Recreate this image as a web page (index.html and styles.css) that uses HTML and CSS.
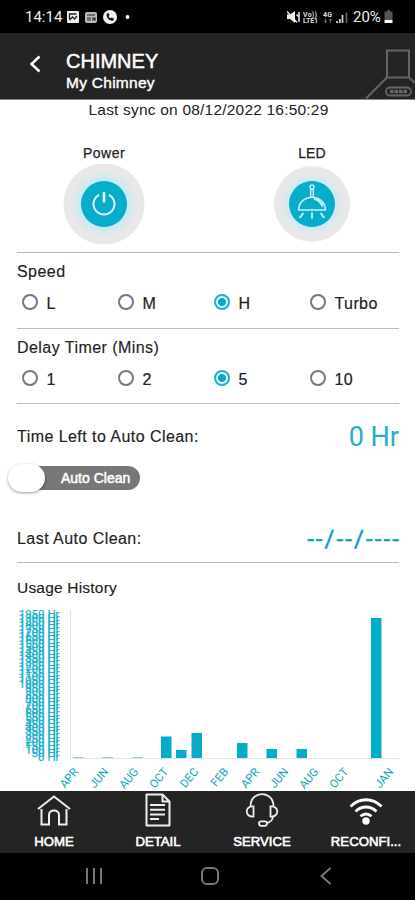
FILE: index.html
```html
<!DOCTYPE html>
<html lang="en">
<head>
  <meta charset="UTF-8">
  <title>My Chimney</title>
  <link rel="stylesheet" href="styles.css">
</head>
<body>
  <div class="status-bar">
    <span class="clock">14:14</span>
    <svg class="status-left" width="66" height="16" viewBox="0 0 66 16">
      <rect x="1" y="2" width="12" height="12" rx="1" fill="#eee"/>
      <path d="M3.500 10V5h7M3.500 11l3-3 2 2 2.500-3" fill="none" stroke="#222" stroke-width="1.300"/>
      <rect x="19" y="3" width="12" height="11" rx="2" fill="#bbb"/>
      <path d="M21 6h8M21 9h4M21 11h4M27 9h2v2h-2z" stroke="#222" stroke-width="1.200" fill="none"/>
      <circle cx="44" cy="8" r="7" fill="#f2f2f2"/>
      <path d="M41 4.500c-2 3 3 8.500 6.500 7l.3-2-2-1-1 .8c-1-.4-1.800-1.200-2.200-2.300l.9-1-.8-1.800z" fill="#111"/>
      <circle cx="61.500" cy="8" r="1.900" fill="#fff"/>
    </svg>
    <div class="status-right">
      <svg width="62" height="16" viewBox="0 0 62 16">
        <path d="M0 5.500h3l5-3.500v12l-5-4H0z" fill="#eee"/>
        <path d="M0 2.500l10 11M9.500 5.500l2 2M12 3v10" stroke="#eee" stroke-width="1.500"/>
        <text class="tiny" x="16" y="7.500" textLength="14">Vo))</text>
        <text class="tiny" x="16" y="14" textLength="15">LTE1</text>
        <text class="tiny" x="36" y="7.500" textLength="9">4G</text>
        <path d="M38.500 10v3.500M37.300 12l1.200 1.500 1.200-1.500M43.500 13.500V10M42.300 11.500l1.200-1.500 1.200 1.500" fill="none" stroke="#777"/>
        <path d="M50 14v-2M52.800 14v-4M55.500 14V6" stroke="#ccc" stroke-width="1.800"/>
        <path d="M59.500 14V3.500" stroke="#666" stroke-width="1.600"/>
      </svg>
      <span class="percent">20%</span>
      <svg width="9" height="14" viewBox="0 0 9 14">
        <path d="M3 0h3v1.500h2.500V10H.5V1.500H3z" fill="#555"/>
        <path d="M.5 10h8v3h-8z" fill="#fff"/>
      </svg>
    </div>
  </div>

  <header class="header">
    <svg class="back" width="14" height="18" viewBox="0 0 14 18">
      <path d="M11.500 1.500L3.500 9l8 7.500" fill="none" stroke="#fff" stroke-width="2.500"/>
    </svg>
    <div class="titles">
      <h1>CHIMNEY</h1>
      <h2>My Chimney</h2>
    </div>
    <svg class="hood" width="50" height="50" viewBox="0 0 50 50">
      <path d="M22 1.500h22v27h-22zM1 49.500L22 28.500M44 28.500L50 34" fill="none" stroke="#666" stroke-width="2"/>
      <rect x="21" y="38.500" width="25" height="8" rx="4" fill="none" stroke="#666" stroke-width="1.800"/>
      <path d="M25 42.500h17" stroke="#666" stroke-width="3.500" stroke-dasharray="3.500 1"/>
    </svg>
  </header>

  <main class="content">
    <p class="sync">Last sync on 08/12/2022 16:50:29</p>

    <section class="switches">
      <div class="switch power">
        <span>Power</span>
        <svg width="82" height="82" viewBox="-41 -41 82 82">
          <defs>
            <radialGradient id="glow">
              <stop offset="0.500" stop-color="#b5eef7"/>
              <stop offset="0.680" stop-color="#d5eaee"/>
              <stop offset="0.850" stop-color="#e9e7e7"/>
            </radialGradient>
          </defs>
          <circle r="40.500" fill="url(#glow)"/>
          <circle r="23" fill="#08adca"/>
          <path d="M-5-9.200a10.500 10.500 0 1 0 10 0" fill="none" stroke="#d9f7fa" stroke-width="2"/>
          <path d="M0-12v10.500" stroke="#d9f7fa" stroke-width="2.600"/>
        </svg>
      </div>
      <div class="switch led">
        <span>LED</span>
        <svg width="82" height="82" viewBox="-41 -41 82 82">
          <circle r="38" fill="url(#glow)"/>
          <circle r="23" fill="#08adca"/>
          <g fill="none" stroke="#c5f1f6" stroke-width="1.500">
            <circle cx="0" cy="-17" r="2"/>
            <path d="M-1.300-15v8M1.300-15v8"/>
            <path d="M-13.500 6c1-17 26-17 27 0zM2-5c4 1 7 4 8.500 8M5-5l6 6"/>
            <path d="M-8.500 9l-4 5M0 8.500v6M8.500 9l4 5" stroke-width="1.900"/>
          </g>
        </svg>
      </div>
    </section>

    <section class="options speed">
      <h3>Speed</h3>
      <div class="radios">
        <label><i class="radio"></i>L</label>
        <label><i class="radio"></i>M</label>
        <label><i class="radio checked"></i>H</label>
        <label><i class="radio"></i>Turbo</label>
      </div>
    </section>

    <section class="options">
      <h3>Delay Timer (Mins)</h3>
      <div class="radios">
        <label><i class="radio"></i>1</label>
        <label><i class="radio"></i>2</label>
        <label><i class="radio checked"></i>5</label>
        <label><i class="radio"></i>10</label>
      </div>
    </section>

    <section class="clean">
      <div class="row">
        <h3>Time Left to Auto Clean:</h3>
        <span class="hours">0 Hr</span>
      </div>
      <div class="toggle"><i class="knob"></i><span>Auto Clean</span></div>
      <div class="row last">
        <h3>Last Auto Clean:</h3>
        <span class="date">--/--/----</span>
      </div>
    </section>

    <section class="history">
      <h3>Usage History</h3>
      <svg class="chart" id="chart" width="415" height="187" viewBox="0 603 415 187">
        <path d="M70.500 609V757" stroke="#e2e2e2"/>
        <path d="M70 757.500H399" stroke="#dfe3e3"/>
        <g id="hours" class="hours-axis"></g>
        <g id="bars" fill="#05abc9"></g>
        <g id="months" class="months-axis"></g>
      </svg>
    </section>
  </main>

  <nav class="tabs">
    <div class="tab">
      <svg width="36" height="36" viewBox="0 0 36 36">
        <path d="M2 17L18 4.500 34 17M5.500 17v15.500h7.500V23c0-6 10-6 10 0v9.500h7.500V17" fill="none" stroke="#eee" stroke-width="2"/>
      </svg>
      <span>HOME</span>
    </div>
    <div class="tab">
      <svg width="36" height="36" viewBox="0 0 36 36">
        <path d="M6.500 2.500h16l7 7v24h-23zM22.500 2.500v7h7" fill="none" stroke="#eee" stroke-width="2" stroke-linejoin="round"/>
        <path d="M10 13h15M10 17.700h15M10 22.400h15M10 27h9" stroke="#eee" stroke-width="2"/>
      </svg>
      <span>DETAIL</span>
    </div>
    <div class="tab">
      <svg width="36" height="36" viewBox="0 0 36 36">
        <g fill="none" stroke="#eee" stroke-width="1.800">
          <path d="M6.500 14.500C6.500-2 29.500-2 29.500 14.500"/>
          <path d="M9.500 14.500v10c-9 1-9-11 0-10zM26.500 14.500v10c9 1 9-11 0-10z"/>
          <path d="M29 24.500c-.5 4-3 6-6.500 6.500"/>
          <rect x="15" y="29.300" width="8" height="4.500" rx="2.200"/>
        </g>
      </svg>
      <span>SERVICE</span>
    </div>
    <div class="tab">
      <svg width="36" height="36" viewBox="0 0 36 36">
        <path d="M2.500 14.500c9-9 22-9 31 0M7.500 19.500c6-6 15-6 21 0M12.500 24.300c3.500-3 7.500-3 11 0" fill="none" stroke="#fff" stroke-width="2.800"/>
        <circle cx="18" cy="29" r="3.700" fill="#fff"/>
      </svg>
      <span>RECONFI...</span>
    </div>
  </nav>

  <div class="system-nav">
    <svg width="18" height="18" viewBox="0 0 18 18"><path d="M2 1v16M9 1v16M16 1v16" stroke="#777" stroke-width="2"/></svg>
    <svg width="18" height="18" viewBox="0 0 18 18"><rect x="1" y="1" width="16" height="16" rx="5" fill="none" stroke="#777" stroke-width="2"/></svg>
    <svg width="18" height="18" viewBox="0 0 18 18"><path d="M13.500 1L4.500 9l9 8" fill="none" stroke="#777" stroke-width="2"/></svg>
  </div>

  <script src="chart.js"></script>
</body>
</html>
```
FILE: styles.css
```css
* {
  box-sizing: border-box;
}
body {
  margin: 0;
  width: 415px;
  height: 900px;
  overflow: hidden;
  background: #fff;
  color: #222;
  font-family: "Liberation Sans", Arial, sans-serif;
}
h1, h2, h3, p {
  margin: 0;
  font-weight: normal;
}
svg {
  display: block;
  flex: none;
}

.status-bar {
  display: flex;
  align-items: center;
  height: 33px;
  padding: 1px 22px 0 25px;
  background: #000;
  color: #eee;
  font-family: Roboto, sans-serif;
  font-size: 15px;
}
.clock {
  width: 41px;
}
.status-right {
  display: flex;
  align-items: center;
  margin-left: auto;
}
.percent {
  width: 31px;
  margin-left: 4px;
  font-size: 15px;
}
.tiny {
  fill: #ddd;
  font-size: 7px;
  font-weight: bold;
}

.header {
  display: flex;
  height: 67px;
  padding-left: 28px;
  background: #242424;
  border-bottom: 1px solid #888;
  color: #fff;
}
.back {
  margin-top: 22px;
}
.titles {
  margin: 17px 0 0 24px;
}
.titles h1 {
  font-size: 20px;
  line-height: 23px;
  -webkit-text-stroke: 0.5px #fff;
}
.titles h2 {
  font-size: 15.5px;
  line-height: 20px;
  letter-spacing: 0.27px;
  -webkit-text-stroke: 0.4px #fff;
}
.hood {
  margin: 16px 0 0 auto;
}

.content {
  height: 691px;
}
.sync {
  height: 43px;
  padding-left: 2px;
  font-size: 15.5px;
  line-height: 20px;
  letter-spacing: 0.2px;
  text-align: center;
}
.switches {
  display: flex;
  justify-content: space-between;
  height: 110px;
  margin: 0 16px 0 17px;
  padding: 0 46px 0 46px;
  border-bottom: 1px solid #a9c0c0;
}
.switch {
  display: flex;
  flex-direction: column;
  align-items: center;
  width: 82px;
  font-size: 14px;
  line-height: 20px;
  letter-spacing: 0.5px;
  -webkit-text-stroke: 0.25px #222;
}
.led span {
  letter-spacing: 0.1px;
}
h3 {
  font-size: 16px;
  line-height: 20px;
  letter-spacing: 0.45px;
  -webkit-text-stroke: 0.15px #222;
}

.options {
  height: 75.5px;
  margin: 0 16px 0 17px;
  padding-top: 9px;
  border-bottom: 1px solid #b4c0c0;
}
.radios {
  display: grid;
  grid-template-columns: repeat(4, 96px);
  margin-top: 10px;
  padding-left: 4.5px;
}
.radios label {
  display: flex;
  gap: 9px;
  font-size: 16px;
  line-height: 24px;
  letter-spacing: 0.4px;
  -webkit-text-stroke: 0.2px #222;
}
.radio {
  width: 16px;
  height: 16px;
  margin-top: 2px;
  border: 2px solid #777;
  border-radius: 50%;
}
.radio.checked {
  border-color: #1aafcb;
  background: radial-gradient(circle, #08a5c4 0 3.5px, #e6fafc 4.5px);
}

.clean {
  height: 159px;
  margin: 0 16px 0 17px;
  padding-top: 18px;
  border-bottom: 1px solid #a9c0c0;
}
.row {
  display: flex;
  align-items: center;
  justify-content: space-between;
  height: 30px;
}
.hours, .date {
  color: #21b0cb;
  font-family: Roboto, sans-serif;
  font-size: 27px;
}
.date {
  margin-right: -2px;
  color: #0b9fbd;
  font-size: 24px;
  letter-spacing: 2.1px;
  -webkit-text-stroke: 0.5px #0b9fbd;
}
.toggle {
  display: flex;
  align-items: center;
  width: 123px;
  height: 24px;
  margin-top: 14px;
  border-radius: 12px;
  background: #777;
  color: #fff;
  font-size: 14px;
  -webkit-text-stroke: 0.5px #fff;
}
.knob {
  width: 37px;
  height: 28px;
  margin: 0 16px 0 -9px;
  border-radius: 14px;
  background: #fff;
  box-shadow: 0 1px 3px rgba(0, 0, 0, 0.4);
}
.last {
  margin-top: 34px;
}

.history h3 {
  height: 41px;
  padding: 15px 0 0 17px;
  font-size: 15.5px;
  letter-spacing: 0.2px;
}
.hours-axis, .months-axis {
  fill: #0fa6b9;
  font-family: Roboto, sans-serif;
  font-size: 11.5px;
}
.hours-axis {
  fill: #22b1c9;
  stroke: #22b1c9;
  stroke-width: 0.2px;
}

.tabs {
  display: grid;
  grid-template-columns: repeat(4, 104px);
  height: 62px;
  margin-left: 2px;
  box-shadow: -2px 0 #242424;
  background: #242424;
}
.tab {
  display: flex;
  flex-direction: column;
  align-items: center;
  padding-top: 1px;
  color: #fff;
  font-size: 13.2px;
  line-height: 28px;
  -webkit-text-stroke: 0.6px #fff;
}

.system-nav {
  display: flex;
  justify-content: space-between;
  height: 47px;
  padding: 14px 80px 0 85px;
  background: #000;
}
```
FILE: chart.js
```js
const hours = document.getElementById('hours');
const bars = document.getElementById('bars');
const months = document.getElementById('months');

function add(parent, tag, attrs, text) {
  const el = document.createElementNS('http://www.w3.org/2000/svg', tag);
  for (const key in attrs) el.setAttribute(key, attrs[key]);
  if (text) el.textContent = text;
  parent.appendChild(el);
}

// every 50 hours gets a label, so they run into each other
for (let h = 0; h <= 1950; h += 50) {
  add(hours, 'text', { x: 59.5, y: 760 - h * 0.0731, 'text-anchor': 'end' }, h + ' Hr');
}

// [left edge, height]
const usage = [
  [73, 0.5], [102.5, 0.5], [132.5, 0.5], [161, 21.500], [176, 8], [191.500, 25],
  [237, 15], [266.500, 9], [296.500, 9], [371, 140]
];
usage.forEach(([x, height]) => {
  add(bars, 'rect', { x, y: 757 - height, width: 10.5, height });
});

const labels = [
  ['APR', 79], ['JUN', 109], ['AUG', 139], ['OCT', 169], ['DEC', 199], ['FEB', 229],
  ['APR', 260], ['JUN', 289], ['AUG', 319], ['OCT', 349], ['JAN', 394]
];
labels.forEach(([name, x]) => {
  add(months, 'text', { transform: `translate(${x} 771) rotate(-50)`, 'text-anchor': 'end' }, name);
});
```
